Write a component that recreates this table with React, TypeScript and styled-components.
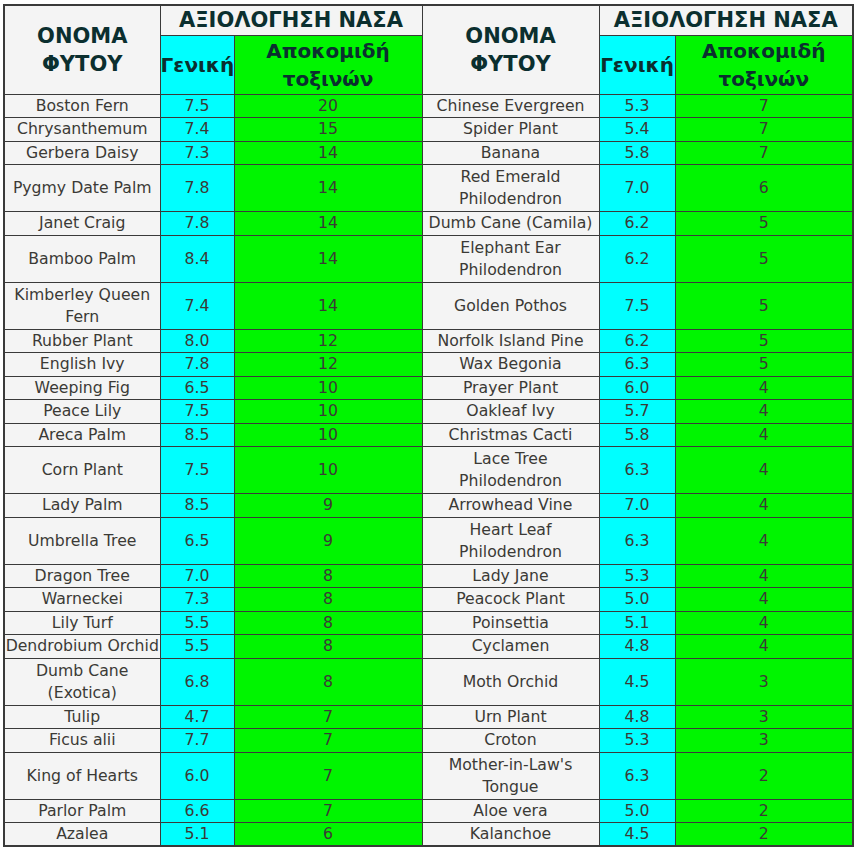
import React from 'react';
import styled, { createGlobalStyle } from 'styled-components';

const GlobalStyle = createGlobalStyle`
    body {
        margin: 0;
        background: #ffffff;
        font-family: 'DejaVu Sans', Verdana, sans-serif;
    }
`;

const Page = styled.div`
    padding: 4px 3px;
`;

const Table = styled.table`
    width: 849px;
    table-layout: fixed;
    border-collapse: collapse;
    border: 2px solid #3a3a3a;
`;

const Col = styled.col<{ $w: number }>`
    width: ${(p) => p.$w}px;
`;

const HeadRow = styled.tr<{ $h: number }>`
    height: ${(p) => p.$h}px;
`;

const HeadCell = styled.th<{ $bg?: string; $size?: number }>`
    border: 1px solid #3a3a3a;
    background: ${(p) => p.$bg || '#f4f4f4'};
    color: #0b2f2f;
    font-size: ${(p) => p.$size || 20}px;
    font-weight: bold;
    line-height: 28px;
    text-align: center;
    padding: 0;
    white-space: nowrap;
`;

const Row = styled.tr<{ $tall?: boolean }>`
    height: ${(p) => (p.$tall ? 47 : 23.5)}px;
`;

const Cell = styled.td<{ $bg?: string }>`
    border: 1px solid #3a3a3a;
    background: ${(p) => p.$bg || '#f4f4f4'};
    color: #3b3a36;
    font-size: 15.7px;
    line-height: 22px;
    text-align: center;
    vertical-align: middle;
    padding: 0;
    white-space: nowrap;
    overflow: hidden;
`;

const CYAN = '#00ffff';
const GREEN = '#00f500';

// '|' marks where the name breaks onto a second line
type Plant = [string, string, number];

const left: Plant[] = [
    ['Boston Fern', '7.5', 20],
    ['Chrysanthemum', '7.4', 15],
    ['Gerbera Daisy', '7.3', 14],
    ['Pygmy Date Palm', '7.8', 14],
    ['Janet Craig', '7.8', 14],
    ['Bamboo Palm', '8.4', 14],
    ['Kimberley Queen|Fern', '7.4', 14],
    ['Rubber Plant', '8.0', 12],
    ['English Ivy', '7.8', 12],
    ['Weeping Fig', '6.5', 10],
    ['Peace Lily', '7.5', 10],
    ['Areca Palm', '8.5', 10],
    ['Corn Plant', '7.5', 10],
    ['Lady Palm', '8.5', 9],
    ['Umbrella Tree', '6.5', 9],
    ['Dragon Tree', '7.0', 8],
    ['Warneckei', '7.3', 8],
    ['Lily Turf', '5.5', 8],
    ['Dendrobium Orchid', '5.5', 8],
    ['Dumb Cane|(Exotica)', '6.8', 8],
    ['Tulip', '4.7', 7],
    ['Ficus alii', '7.7', 7],
    ['King of Hearts', '6.0', 7],
    ['Parlor Palm', '6.6', 7],
    ['Azalea', '5.1', 6],
];

const right: Plant[] = [
    ['Chinese Evergreen', '5.3', 7],
    ['Spider Plant', '5.4', 7],
    ['Banana', '5.8', 7],
    ['Red Emerald|Philodendron', '7.0', 6],
    ['Dumb Cane (Camila)', '6.2', 5],
    ['Elephant Ear|Philodendron', '6.2', 5],
    ['Golden Pothos', '7.5', 5],
    ['Norfolk Island Pine', '6.2', 5],
    ['Wax Begonia', '6.3', 5],
    ['Prayer Plant', '6.0', 4],
    ['Oakleaf Ivy', '5.7', 4],
    ['Christmas Cacti', '5.8', 4],
    ['Lace Tree|Philodendron', '6.3', 4],
    ['Arrowhead Vine', '7.0', 4],
    ['Heart Leaf|Philodendron', '6.3', 4],
    ['Lady Jane', '5.3', 4],
    ['Peacock Plant', '5.0', 4],
    ['Poinsettia', '5.1', 4],
    ['Cyclamen', '4.8', 4],
    ['Moth Orchid', '4.5', 3],
    ['Urn Plant', '4.8', 3],
    ['Croton', '5.3', 3],
    ["Mother-in-Law's|Tongue", '6.3', 2],
    ['Aloe vera', '5.0', 2],
    ['Kalanchoe', '4.5', 2],
];

const colWidths = [156, 74, 188, 177, 76, 178];

const isTall = (i: number) => left[i][0].includes('|') || right[i][0].includes('|') || [3, 5].includes(i);

const HeaderGroup = () => (
    <>
        <HeadCell rowSpan={2} $size={21}>
            ΟΝΟΜΑ
            <br />
            ΦΥΤΟΥ
        </HeadCell>
        <HeadCell colSpan={2} $size={21}>
            ΑΞΙΟΛΟΓΗΣΗ ΝΑΣΑ
        </HeadCell>
    </>
);

const SubHeader = () => (
    <>
        <HeadCell $bg={CYAN} $size={20}>
            Γενική
        </HeadCell>
        <HeadCell $bg={GREEN} $size={20}>
            Αποκομιδή
            <br />
            τοξινών
        </HeadCell>
    </>
);

const PlantName = ({ name }: { name: string }) => (
    <>
        {name.split('|').map((part, i) => (
            <React.Fragment key={i}>
                {i > 0 && <br />}
                {part}
            </React.Fragment>
        ))}
    </>
);

const PlantCells = ({ plant }: { plant: Plant }) => (
    <>
        <Cell>
            <PlantName name={plant[0]} />
        </Cell>
        <Cell $bg={CYAN}>{plant[1]}</Cell>
        <Cell $bg={GREEN}>{plant[2]}</Cell>
    </>
);

export default function App() {
    return (
        <Page>
            <GlobalStyle />
            <Table>
                <colgroup>
                    {colWidths.map((w, i) => (
                        <Col key={i} $w={w} />
                    ))}
                </colgroup>
                <thead>
                    <HeadRow $h={30}>
                        <HeaderGroup />
                        <HeaderGroup />
                    </HeadRow>
                    <HeadRow $h={59}>
                        <SubHeader />
                        <SubHeader />
                    </HeadRow>
                </thead>
                <tbody>
                    {left.map((plant, i) => (
                        <Row key={plant[0]} $tall={isTall(i)}>
                            <PlantCells plant={plant} />
                            <PlantCells plant={right[i]} />
                        </Row>
                    ))}
                </tbody>
            </Table>
        </Page>
    );
}
